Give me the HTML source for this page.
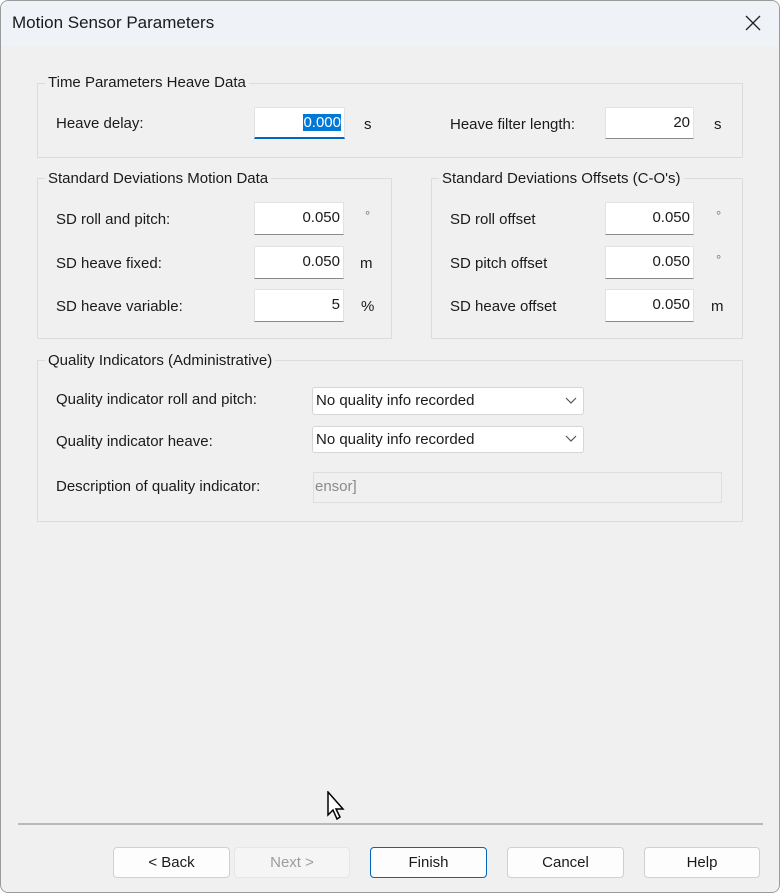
<!DOCTYPE html><html><head><style>
*{margin:0;padding:0;box-sizing:border-box}
body{width:780px;height:893px;background:#fff;font-family:"Liberation Sans",sans-serif;font-size:15px;color:#1a1a1a;position:relative;overflow:hidden}
.win{position:absolute;left:0;top:0;width:780px;height:893px;background:#f0f0f0;border-radius:8px;overflow:hidden}
.bd{position:absolute;left:0;top:0;width:780px;height:893px;border:1px solid #9a9a9a;border-radius:8px;pointer-events:none}
.tb{position:absolute;left:0;top:0;width:780px;height:46px;background:#eff3f8}
.a{position:absolute;white-space:nowrap}
.g{position:absolute;border:1px solid #dcdcdc}
.gl{position:absolute;background:#f0f0f0;padding:0 3px;white-space:nowrap;font-size:15px}
.in{position:absolute;background:#fff;border:1px solid #e2e2e2;border-bottom:1px solid #8a8a8a;text-align:right;padding:6px 3px 0 0;font-size:15px}
.cb{position:absolute;background:#fff;border:1px solid #d6d6d6;border-radius:3px;padding:4px 0 0 3px}
.bt{position:absolute;top:847px;height:31px;background:#fdfdfd;border:1px solid #d0d0d0;border-radius:4px;text-align:center;line-height:29px;font-size:15px}
.dg{position:absolute;font-size:13px;color:#777}
</style></head><body><div class="win">
<div class="tb"></div>
<div class="a" style="left:12px;top:13px;font-size:17px">Motion Sensor Parameters</div>
<svg class="a" style="left:745px;top:15px" width="16" height="16"><path d="M1 1L15 15M15 1L1 15" stroke="#222" stroke-width="1.3"/></svg>

<div class="g" style="left:37px;top:83px;width:706px;height:75px"></div>
<div class="gl" style="left:45px;top:74px">Time Parameters Heave Data</div>
<div class="a" style="left:56px;top:115px">Heave delay:</div>
<div class="in" style="left:254px;top:107px;width:91px;height:32px;border-bottom:2px solid #0067c0"><span style="background:#0078d7;color:#fff">0.000</span></div>
<div class="a" style="left:364px;top:116px">s</div>
<div class="a" style="left:450px;top:116px">Heave filter length:</div>
<div class="in" style="left:605px;top:107px;width:89px;height:32px">20</div>
<div class="a" style="left:714px;top:116px">s</div>

<div class="g" style="left:37px;top:178px;width:355px;height:161px"></div>
<div class="gl" style="left:45px;top:170px">Standard Deviations Motion Data</div>
<div class="a" style="left:56px;top:211px">SD roll and pitch:</div>
<div class="in" style="left:254px;top:202px;width:90px;height:33px">0.050</div>
<div class="dg" style="left:365px;top:208px">°</div>
<div class="a" style="left:56px;top:255px">SD heave fixed:</div>
<div class="in" style="left:254px;top:246px;width:90px;height:33px">0.050</div>
<div class="a" style="left:360px;top:255px">m</div>
<div class="a" style="left:56px;top:298px">SD heave variable:</div>
<div class="in" style="left:254px;top:289px;width:90px;height:33px">5</div>
<div class="a" style="left:361px;top:298px">%</div>

<div class="g" style="left:431px;top:178px;width:312px;height:161px"></div>
<div class="gl" style="left:439px;top:170px">Standard Deviations Offsets (C-O's)</div>
<div class="a" style="left:450px;top:211px">SD roll offset</div>
<div class="in" style="left:605px;top:202px;width:89px;height:33px">0.050</div>
<div class="dg" style="left:716px;top:208px">°</div>
<div class="a" style="left:450px;top:255px">SD pitch offset</div>
<div class="in" style="left:605px;top:246px;width:89px;height:33px">0.050</div>
<div class="dg" style="left:716px;top:252px">°</div>
<div class="a" style="left:450px;top:298px">SD heave offset</div>
<div class="in" style="left:605px;top:289px;width:89px;height:33px">0.050</div>
<div class="a" style="left:711px;top:298px">m</div>

<div class="g" style="left:37px;top:360px;width:706px;height:162px"></div>
<div class="gl" style="left:45px;top:352px">Quality Indicators (Administrative)</div>
<div class="a" style="left:56px;top:391px">Quality indicator roll and pitch:</div>
<div class="cb" style="left:312px;top:387px;width:272px;height:28px">No quality info recorded</div>
<svg class="a" style="left:565px;top:397px" width="12" height="8"><path d="M1 1L6 6L11 1" stroke="#555" fill="none" stroke-width="1.2"/></svg>
<div class="a" style="left:56px;top:433px">Quality indicator heave:</div>
<div class="cb" style="left:312px;top:426px;width:272px;height:27px">No quality info recorded</div>
<svg class="a" style="left:565px;top:435px" width="12" height="8"><path d="M1 1L6 6L11 1" stroke="#555" fill="none" stroke-width="1.2"/></svg>
<div class="a" style="left:56px;top:478px">Description of quality indicator:</div>
<div class="a" style="left:313px;top:472px;width:409px;height:31px;border:1px solid #dedede;padding:5px 0 0 1px;color:#8a8a8a">ensor]</div>

<svg class="a" style="left:326px;top:791px" width="22" height="32"><path d="M2 1L2 24L7 19L11 28L14 26L10 18L17 18Z" fill="#fff" stroke="#000" stroke-width="1.5"/></svg>
<div class="a" style="left:18px;top:823px;width:745px;height:2px;background:#b9b9b9"></div>
<div class="bt" style="left:113px;width:117px">&lt; Back</div>
<div class="bt" style="left:234px;width:116px;background:#f5f5f5;border-color:#e6e6e6;color:#9d9d9d">Next &gt;</div>
<div class="bt" style="left:370px;width:117px;border-color:#0067c0">Finish</div>
<div class="bt" style="left:507px;width:117px">Cancel</div>
<div class="bt" style="left:644px;width:116px">Help</div>
<div class="bd"></div>
</div></body></html>
